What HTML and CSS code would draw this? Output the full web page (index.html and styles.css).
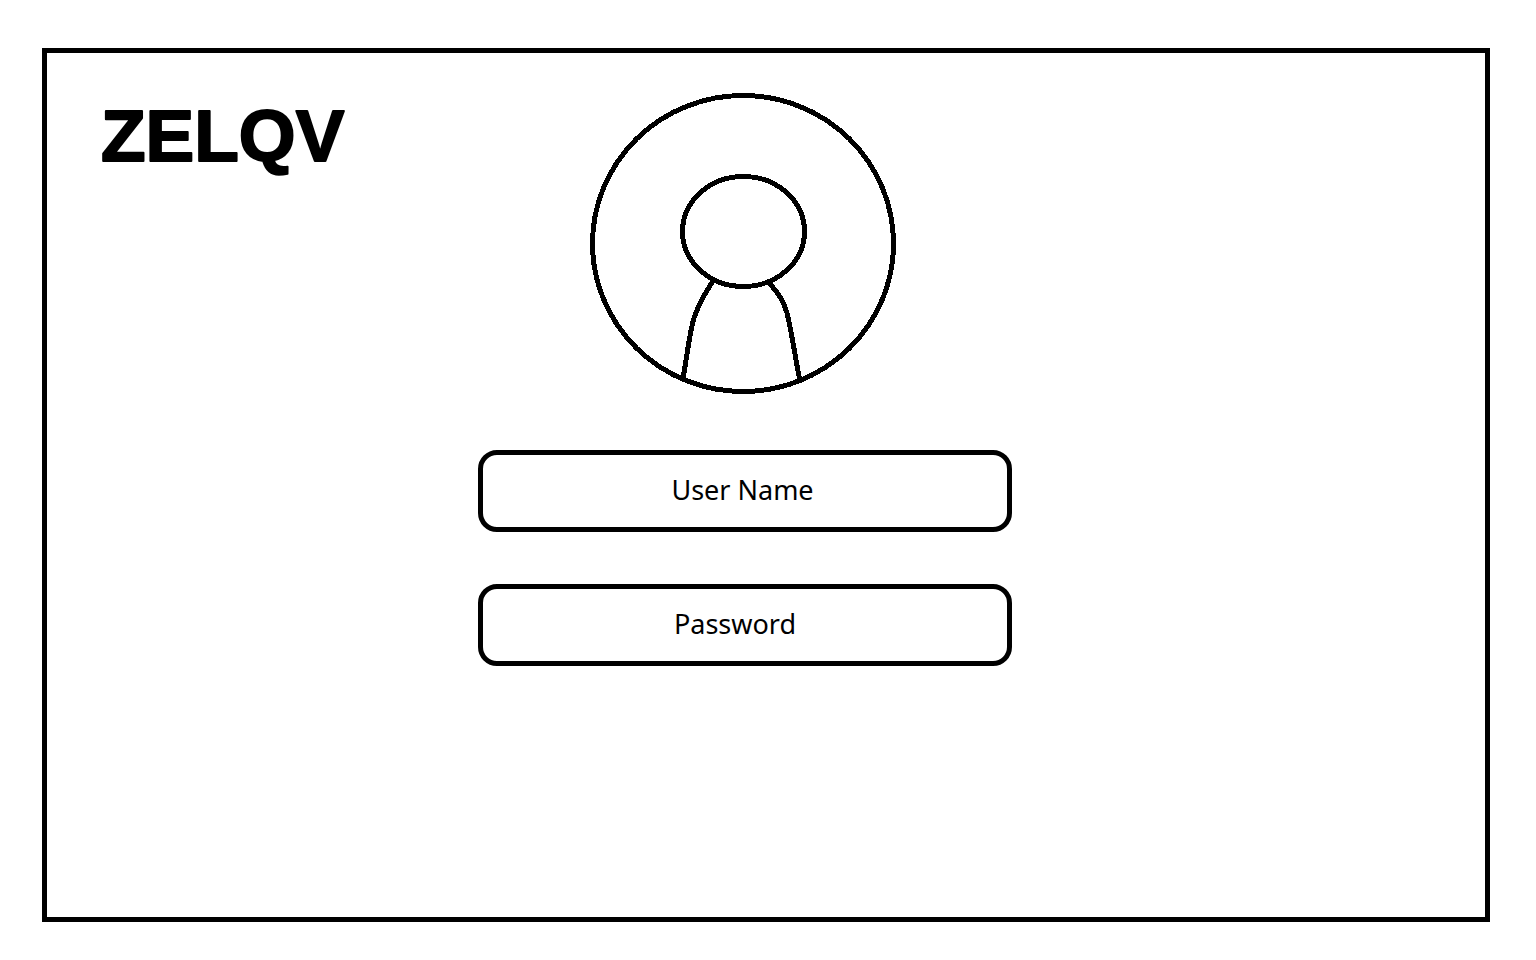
FILE: index.html
```
<!DOCTYPE html>
<html lang="en">
<head>
<meta charset="utf-8">
<title>ZELQV</title>
<link rel="stylesheet" href="styles.css">
</head>
<body>
<main class="frame">
  <h1 class="brand">
    <svg class="brand-mark" width="280" height="110" viewBox="0 0 280 110"><text class="brand-text" x="6" y="80">ZELQV</text></svg>
  </h1>
  <form class="login">
    <svg class="avatar" width="306" height="302" viewBox="0 0 306 302" aria-hidden="true">
      <ellipse cx="153" cy="150.5" rx="150.5" ry="148"/>
      <ellipse cx="153.5" cy="138.5" rx="61" ry="55"/>
      <path d="M123 188C115 200 108 213 104 225C99 242 97 264 93 285.500"/>
      <path d="M178.500 189.500C189 200 194 209 197 220C202 240 205 264 210 288"/>
    </svg>
    <input class="field" type="text" placeholder="User Name" aria-label="User Name" autocomplete="username">
    <input class="field field-password" type="password" placeholder="Password" aria-label="Password" autocomplete="current-password">
  </form>
</main>
</body>
</html>
```
FILE: styles.css
```
* { box-sizing: border-box; }

body {
  margin: 0;
  min-height: 100vh;
  padding: 48px 46px 38px 42px;
  display: flex;
  background: #fff;
  color: #000;
  font-family: "Noto Sans", "Open Sans", sans-serif;
}

.frame {
  flex: 1;
  display: grid;
  grid-template-columns: 431fr 534fr 473fr;
  align-items: start;
  border: 5px solid #000;
  padding: 40px 0;
}

.brand {
  margin: 0 0 0 48px;
  line-height: 0;
}

.brand-mark {
  margin-top: -12px;
}

.brand-text {
  font: 700 73px "Arial Rounded MT Bold", "Liberation Sans", Arial, sans-serif;
  fill: #000;
  stroke: #000;
  stroke-width: 2px;
  stroke-linejoin: round;
}

.login {
  display: flex;
  flex-direction: column;
  align-items: center;
  gap: 52px;
}

.avatar {
  margin: 0 4px 3px 0;
  fill: none;
  stroke: #000;
  stroke-width: 5px;
  stroke-linecap: round;
  shape-rendering: crispEdges;
}

.field {
  width: 100%;
  height: 82px;
  padding: 0 5px 4px 0;
  border: 5px solid #000;
  border-radius: 19px;
  background: #fff;
  color: #000;
  font: 400 27px "Noto Sans", "Open Sans", sans-serif;
  text-align: center;
}

.field-password { padding-right: 20px; }

.field::placeholder {
  color: #000;
  opacity: 1;
}
```
